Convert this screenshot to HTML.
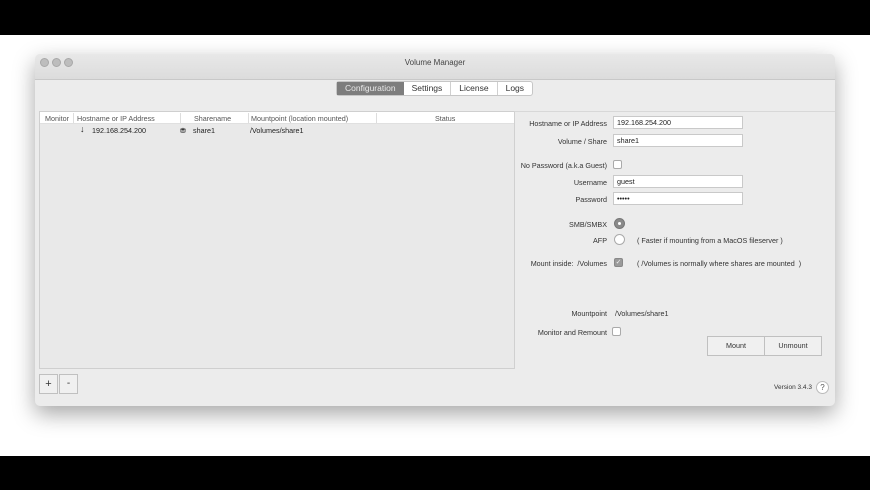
<!DOCTYPE html>
<html><head><style>
*{margin:0;padding:0;box-sizing:border-box}
body{width:870px;height:490px;background:#fff;position:relative;overflow:hidden;font-family:"Liberation Sans",sans-serif;font-size:7.2px;color:#333}
.bar{position:absolute;left:0;width:870px;background:#000}
.win{position:absolute;left:35px;top:54px;width:800px;height:352px;background:#ececec;border-radius:5px;box-shadow:0 8px 22px rgba(0,0,0,.35);overflow:hidden}
.title{height:26px;background:linear-gradient(#e8e8e8,#dcdcdc);border-bottom:1px solid #c8c8c8;text-align:center;line-height:17px;font-size:8px;color:#444}
.dot{position:absolute;top:4px;width:9px;height:9px;border-radius:50%;background:#bdbdbd;border:1px solid #a8a8a8}
.a{position:absolute}
.tabs{position:absolute;left:301px;top:27px;height:15px;display:flex;border:1px solid #c6c6c6;border-radius:3px;background:#fff;font-size:8.5px}
.tabs div{padding:0 8px;line-height:13px;border-left:1px solid #d0d0d0;color:#333}
.tabs div.on{background:#7d7d7d;color:#e8e8e8;border:none}
.tbl{position:absolute;left:4px;top:57px;width:476px;height:258px;background:#e9e9e9;border:1px solid #cfcfcf}
.hdr{height:12px;background:#fff;border-bottom:1px solid #e0e0e0;position:relative;color:#555}
.hdr span,.row span{position:absolute;top:2px}
.hdr i{position:absolute;top:1px;height:10px;width:1px;background:#ddd}
.row{height:14px;position:relative;color:#222}
.lbl{position:absolute;text-align:right;color:#333}
.inp{position:absolute;background:#fff;border:1px solid #c9c9c9;height:13px;padding-left:3px;line-height:11px;color:#222}
.cb{position:absolute;width:9px;height:9px;background:#fff;border:1px solid #aaa;border-radius:2px}
.btn{position:absolute;background:#f0f0f0;border:1px solid #c0c0c0;text-align:center}
</style></head><body>
<div class="bar" style="top:0;height:35px"></div>
<div class="bar" style="top:456px;height:34px"></div>
<div class="win">
 <div class="title">Volume Manager</div>
 <div class="dot" style="left:5px"></div><div class="dot" style="left:17px"></div><div class="dot" style="left:29px"></div>
 <div class="tabs"><div class="on">Configuration</div><div style="border-left:none">Settings</div><div>License</div><div>Logs</div></div>
 <div class="tbl">
  <div class="hdr"><span style="left:5px">Monitor</span><i style="left:33px"></i><span style="left:37px">Hostname or IP Address</span><i style="left:140px"></i><span style="left:154px">Sharename</span><i style="left:208px"></i><span style="left:211px">Mountpoint (location mounted)</span><i style="left:336px"></i><span style="left:395px">Status</span></div>
  <div class="row"><span style="left:40px;font-size:9px;top:0">↓</span><span style="left:52px">192.168.254.200</span><span style="left:140px">⛃</span><span style="left:153px">share1</span><span style="left:210px">/Volumes/share1</span></div>
 </div>
 <div class="a" style="left:479px;top:57px;width:321px;height:258px;border-left:1px solid #d0d0d0;border-top:1px solid #d8d8d8"></div>
 <div class="btn" style="left:4px;top:320px;width:19px;height:20px;line-height:18px;font-size:11px">+</div>
 <div class="btn" style="left:24px;top:320px;width:19px;height:20px;line-height:18px;font-size:10px">-</div>
 <div class="lbl" style="right:228px;top:65px">Hostname or IP Address</div><div class="inp" style="left:578px;top:62px;width:130px">192.168.254.200</div>
 <div class="lbl" style="right:228px;top:83px">Volume / Share</div><div class="inp" style="left:578px;top:80px;width:130px">share1</div>
 <div class="lbl" style="right:228px;top:107px">No Password (a.k.a Guest)</div><div class="cb" style="left:578px;top:106px"></div>
 <div class="lbl" style="right:228px;top:124px">Username</div><div class="inp" style="left:578px;top:121px;width:130px">guest</div>
 <div class="lbl" style="right:228px;top:141px">Password</div><div class="inp" style="left:578px;top:138px;width:130px">•••••</div>
 <div class="lbl" style="right:228px;top:166px">SMB/SMBX</div><div class="a" style="left:579px;top:164px;width:11px;height:11px;border-radius:50%;background:#8a8a8a;border:1px solid #777"><div class="a" style="left:3px;top:3px;width:3px;height:3px;border-radius:50%;background:#fff"></div></div>
 <div class="lbl" style="right:228px;top:182px">AFP</div><div class="a" style="left:579px;top:180px;width:11px;height:11px;border-radius:50%;background:#fff;border:1px solid #aaa"></div>
 <div class="a" style="left:602px;top:182px">( Faster if mounting from a MacOS fileserver )</div>
 <div class="lbl" style="right:228px;top:205px">Mount inside:&nbsp; /Volumes</div><div class="cb" style="left:579px;top:204px;background:#9a9a9a;border-color:#888;color:#eee;font-size:7px;line-height:7px;text-align:center">✓</div>
 <div class="a" style="left:602px;top:205px">( /Volumes is normally where shares are mounted&nbsp; )</div>
 <div class="lbl" style="right:228px;top:255px">Mountpoint</div><div class="a" style="left:580px;top:255px">/Volumes/share1</div>
 <div class="lbl" style="right:228px;top:274px">Monitor and Remount</div><div class="cb" style="left:577px;top:273px"></div>
 <div class="btn" style="left:672px;top:282px;width:58px;height:20px;line-height:18px">Mount</div>
 <div class="btn" style="left:729px;top:282px;width:58px;height:20px;line-height:18px">Unmount</div>
 <div class="a" style="left:739px;top:330px;font-size:6.5px">Version 3.4.3</div>
 <div class="a" style="left:781px;top:327px;width:13px;height:13px;border-radius:50%;background:#fff;border:1px solid #bbb;text-align:center;line-height:11px;font-size:8px;color:#555">?</div>
</div>
</body></html>
